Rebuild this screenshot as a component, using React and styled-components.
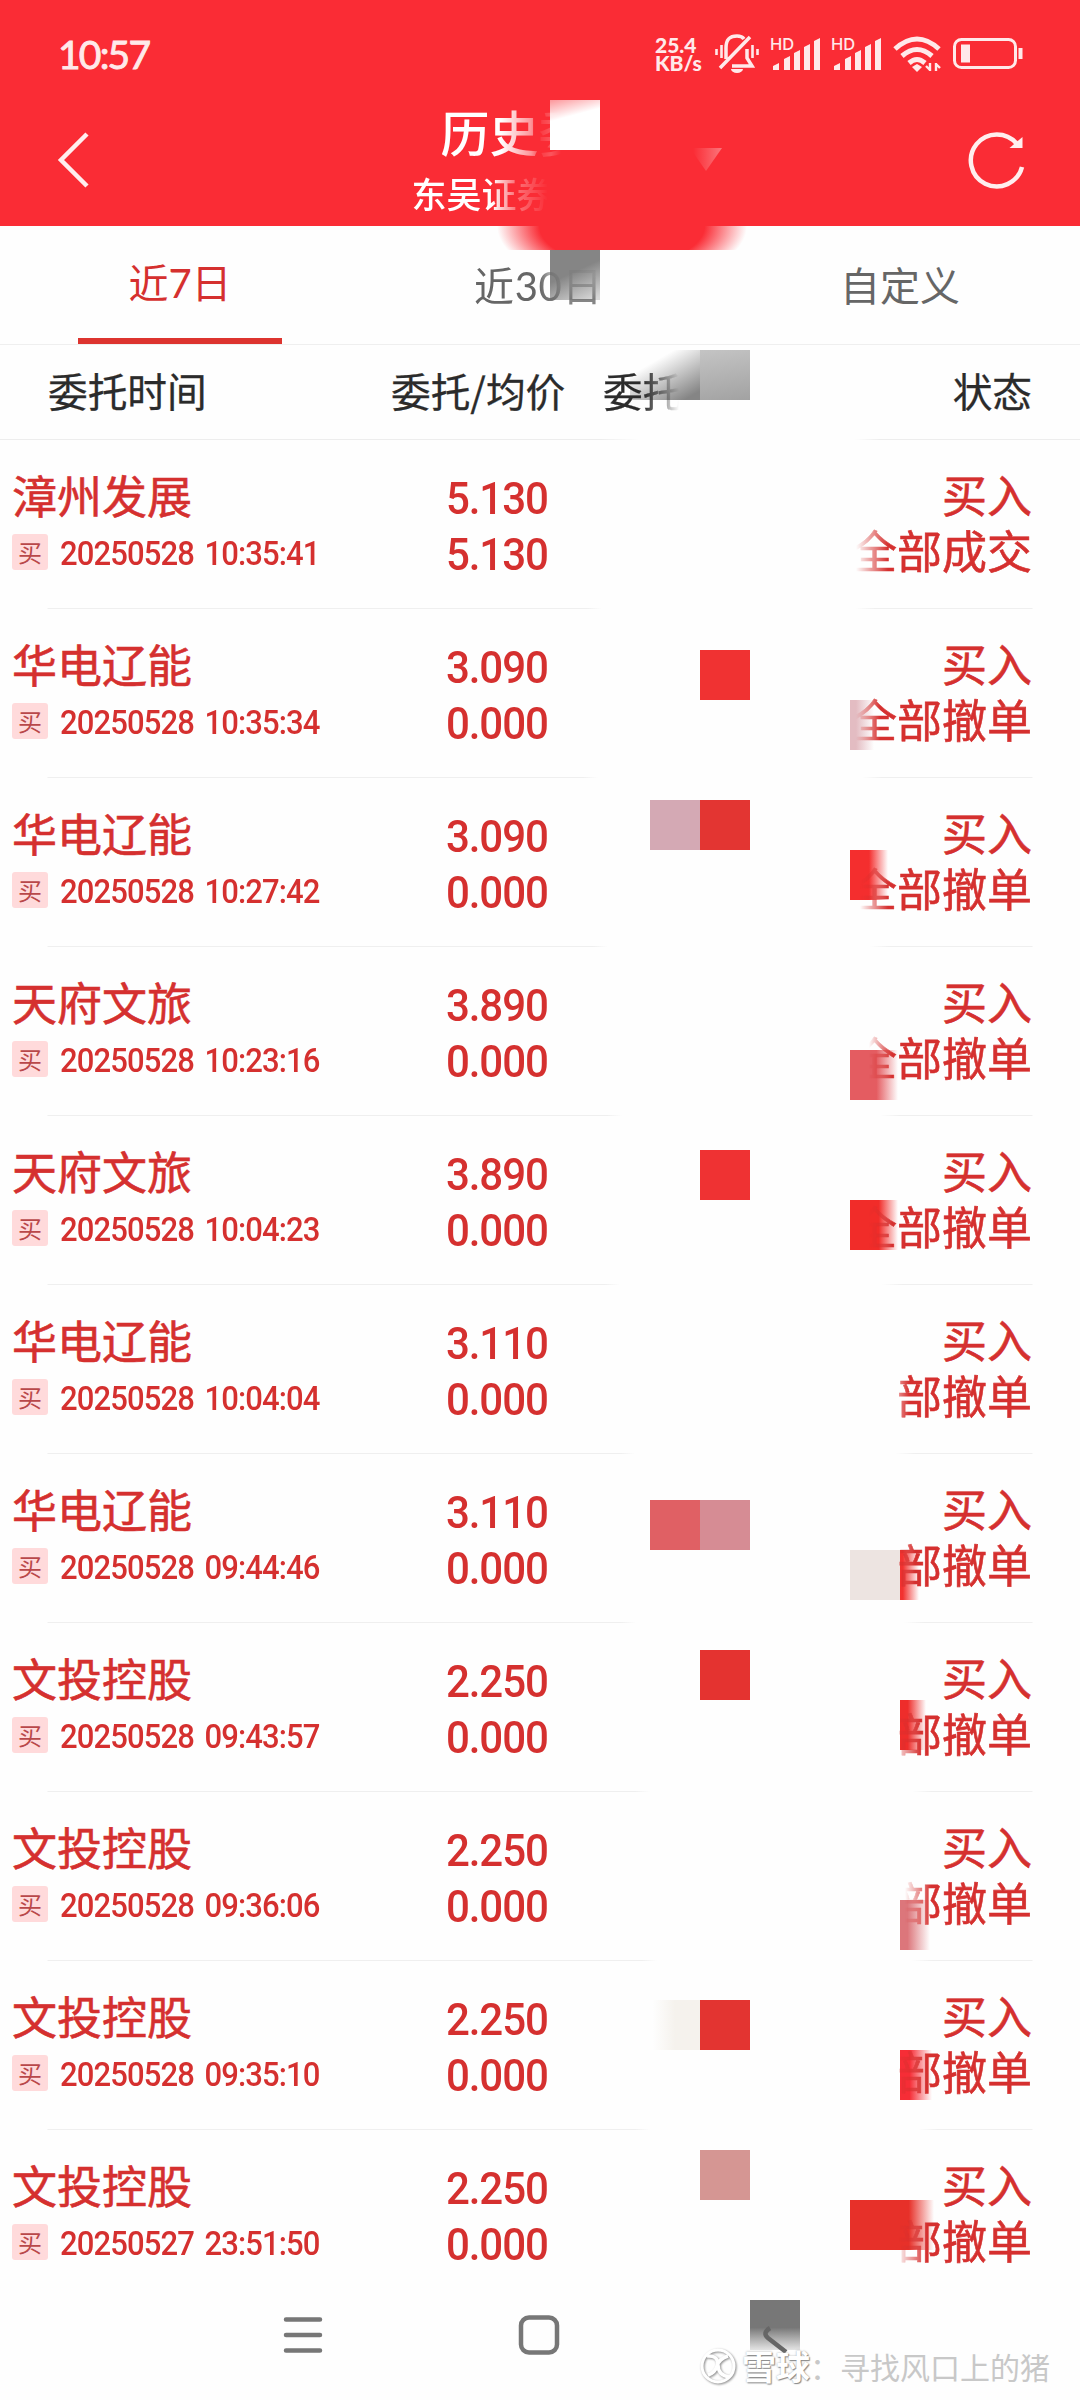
import React from 'react'
import styled, {createGlobalStyle} from "styled-components";

const CJK = `"Noto Sans CJK SC", sans-serif`;
const RED = '#d5302f';
const HEADER_RED = '#fa2c35';

const GlobalStyle = createGlobalStyle`
    * {
        box-sizing: border-box;
    }
    body {
        margin: 0;
        background: #fefefe;
        font-family: Roboto, ${CJK};
    }
    svg {
        flex: none;
        overflow: visible;
    }
`;

const Screen = styled.div`
    position: relative;
    width: 1080px;
    height: 2400px;
    overflow: hidden;
    display: flex;
    flex-direction: column;
    background: #fefefe;
`;

const Top = styled.header`
    height: 226px;
    flex: none;
    background: ${HEADER_RED};
    color: #fff;
    display: flex;
    flex-direction: column;
`;

const StatusBar = styled.div`
    height: 96px;
    padding: 12px 57px 0 58px;
    display: flex;
    justify-content: space-between;
    align-items: center;
    color: #ffe9ea;
`;

const Clock = styled.span`
    font: 400 39px/1 Lato, sans-serif;
    letter-spacing: -1.8px;
    -webkit-text-stroke: .9px #ffe9ea;
`;

const StatusIcons = styled.div`
    display: flex;
    align-items: center;
    gap: 12px;
`;

const NetSpeed = styled.div`
    width: 48px;
    display: flex;
    flex-direction: column;
    font: 900 21px/18px Lato, sans-serif;
    white-space: nowrap;
`;

const NavRow = styled.div`
    height: 130px;
    padding: 0 55px 0 57px;
    display: flex;
    justify-content: space-between;
`;

const Titles = styled.div`
    width: 256px;
    margin-left: 21px;
    display: flex;
    flex-direction: column;
    font-family: ${CJK};
`;

const Title = styled.h1`
    margin: 7px 0 0 29px;
    font-size: 49px;
    line-height: 56px;
    font-weight: 500;
    mask-image: linear-gradient(to right, #000 60px, rgba(0, 0, 0, .5) 90px, rgba(0, 0, 0, .08) 100px, rgba(0, 0, 0, .2) 110px, transparent 120px);
`;

const Subtitle = styled.div`
    margin-top: 9px;
    font-size: 35px;
    line-height: 50px;
    font-weight: 500;
    mask-image: linear-gradient(to right, #000 80px, rgba(0, 0, 0, .35) 103px, rgba(0, 0, 0, .12) 125px, transparent 136px);
`;

const Tabs = styled.nav`
    height: 119px;
    flex: none;
    border-bottom: 1px solid #efefef;
    display: grid;
    grid-template-columns: 360px 360px 360px;
`;

const Tab = styled.div`
    position: relative;
    display: flex;
    flex-direction: column;
    align-items: center;
    justify-content: space-between;
    font: 400 40px/58px Lato, ${CJK};
    color: ${props => props.$active ? RED : '#666'};
    padding-top: ${props => props.$active ? 28 : 31}px;
    &:after {
        content: '';
        width: 204px;
        height: 6px;
        background: ${props => props.$active ? '#dd342f' : 'transparent'};
    }
`;

const SmearedLabel = styled.span`
    margin-right: 3px;
    letter-spacing: .6px;
    mask-image: linear-gradient(to right, #000 65px, transparent 85px), linear-gradient(to bottom, rgba(0, 0, 0, .15) 16px, rgba(0, 0, 0, .8) 42px);
`;

const Columns = styled.div`
    height: 95px;
    flex: none;
    padding: 0 48px 6px 48px;
    display: grid;
    grid-template-columns: 343px 212px 1fr auto;
    align-items: center;
    font: 400 39.700px/58px ${CJK};
    color: #2b2b2b;
    -webkit-text-stroke: .3px #2b2b2b;
    background: linear-gradient(to right, #ededed 600px, transparent 640px, transparent 855px, #ededed 880px) bottom / 100% 1px no-repeat;
`;

const FadedColumn = styled.span`
    mask-image: linear-gradient(to right, #000 40px, rgba(0, 0, 0, .5) 60px, transparent 76px);
`;

const Row = styled.div`
    height: 169px;
    flex: none;
    padding: 24px 48px 0 12px;
    display: grid;
    grid-template-columns: 434px 1fr auto;
    color: ${RED};
    background: linear-gradient(to right, transparent 47px, #efefef 48px, #efefef ${props => props.$gap[0] - 15}px, transparent ${props => props.$gap[0]}px, transparent ${props => props.$gap[1] - 10}px, #efefef ${props => props.$gap[1] + 10}px, #efefef 1032px, transparent 1033px) bottom / 100% 1px no-repeat;
    &:nth-last-child(2) {
        background: none;
    }
`;

const Name = styled.div`
    font: 400 45px/64px ${CJK};
    -webkit-text-stroke: .6px ${RED};
    margin-top: -1px;
`;

const Meta = styled.div`
    display: flex;
    align-items: center;
    gap: 12px;
    height: 36px;
    margin-top: 7px;
`;

const Time = styled.time`
    font: 500 33px/36px Roboto, sans-serif;
    letter-spacing: -.95px;
    word-spacing: 4px;
    white-space: nowrap;
    transform: scaleX(.94);
    transform-origin: left;
    padding-top: 4px;
`;

const Side = styled.span`
    width: 36px;
    height: 36px;
    border-radius: 3px;
    background: #ffdadb;
    color: #b9484a;
    text-align: center;
    font: 400 24px/35px ${CJK};
`;

const Prices = styled.div`
    padding-top: 7px;
    font: 500 45px/56px Roboto, sans-serif;
    letter-spacing: -1.2px;
    transform: scaleX(.935);
    transform-origin: left;
`;

const State = styled.div`
    font: 400 45px/56px ${CJK};
    -webkit-text-stroke: .6px ${RED};
    text-align: right;
    padding-top: 2px;
`;

const StateResult = styled.div`
    mask-image: linear-gradient(to right, transparent ${props => props.$fade[0]}px, #000 ${props => props.$fade[1]}px);
`;

/* mosaic patches that hide parts of the list */
const Patch = styled.i`
    position: absolute;
    left: ${props => props.$x}px;
    top: ${props => props.$y}px;
    width: ${props => props.$w || 50}px;
    height: ${props => props.$h || 50}px;
    background: ${props => props.$bg};
`;

const Dropdown = styled.i`
    position: absolute;
    left: 690px;
    top: 148px;
    width: 32px;
    height: 23px;
    clip-path: polygon(0 0, 100% 0, 50% 100%);
    background: linear-gradient(to right, transparent 10%, rgba(255, 255, 255, .35));
`;

const BottomNav = styled.div`
    flex: 1;
    position: relative;
    display: flex;
    align-items: flex-start;
    gap: 196px;
    padding: 16px 0 0 284px;
    color: #777;
`;

const Watermark = styled.div`
    position: absolute;
    right: 30px;
    bottom: 12px;
    display: flex;
    align-items: center;
    color: #c8c8c8;
    font: 400 30px/44px ${CJK};
    svg {
        margin-right: 5px;
        filter: drop-shadow(1px 1px 1px #888);
    }
    b {
        color: #fff;
        font-size: 34px;
        font-weight: 700;
        text-shadow: 1px 1px 1px #888, 0 0 2px #aaa;
    }
`;

const orders = [
    {name: '漳州发展', time: '20250528 10:35:41', price: '5.130', avg: '5.130', result: '全部成交', gap: [602, 865], fade: [4, 36]},
    {name: '华电辽能', time: '20250528 10:35:34', price: '3.090', avg: '0.000', result: '全部撤单', gap: [598, 872], fade: [4, 28]},
    {name: '华电辽能', time: '20250528 10:27:42', price: '3.090', avg: '0.000', result: '全部撤单', gap: [608, 880], fade: [8, 36]},
    {name: '天府文旅', time: '20250528 10:23:16', price: '3.890', avg: '0.000', result: '全部撤单', gap: [622, 890], fade: [17, 40]},
    {name: '天府文旅', time: '20250528 10:04:23', price: '3.890', avg: '0.000', result: '全部撤单', gap: [620, 892], fade: [17, 40]},
    {name: '华电辽能', time: '20250528 10:04:04', price: '3.110', avg: '0.000', result: '部撤单', gap: [635, 905], fade: [-12, 12]},
    {name: '华电辽能', time: '20250528 09:44:46', price: '3.110', avg: '0.000', result: '部撤单', gap: [636, 914], fade: [-10, 18]},
    {name: '文投控股', time: '20250528 09:43:57', price: '2.250', avg: '0.000', result: '部撤单', gap: [650, 922], fade: [-4, 24]},
    {name: '文投控股', time: '20250528 09:36:06', price: '2.250', avg: '0.000', result: '部撤单', gap: [657, 922], fade: [8, 34]},
    {name: '文投控股', time: '20250528 09:35:10', price: '2.250', avg: '0.000', result: '部撤单', gap: [650, 928], fade: [-4, 28]},
    {name: '文投控股', time: '20250527 23:51:50', price: '2.250', avg: '0.000', result: '部撤单', gap: [650, 928], fade: [0, 30]},
];

const fadeOut = (color, from) => `linear-gradient(to right, ${color} ${from}, transparent)`;

const patches = [
    {x: 497, y: 226, w: 250, h: 24, bg: `radial-gradient(125px 60px at 50% 0, ${HEADER_RED} 66%, transparent 100%)`},
    {x: 550, y: 100, bg: 'linear-gradient(165deg, rgba(255,255,255,.5), #fff 34%)'},
    {x: 550, y: 250, bg: 'linear-gradient(155deg, #858585 45%, #d8d8d8 95%)'},
    {x: 630, y: 350, w: 70, bg: 'linear-gradient(150deg, transparent 28%, #858585 90%)'},
    {x: 700, y: 350, bg: 'linear-gradient(170deg, #c4c4c4, #a2a2a2)'},
    {x: 700, y: 650, bg: '#f03232'},
    {x: 850, y: 700, w: 24, bg: fadeOut('#e3bcc2', '25%')},
    {x: 650, y: 800, bg: '#d4a9b4'},
    {x: 700, y: 800, bg: '#e33532'},
    {x: 850, y: 850, w: 38, bg: fadeOut('#f42e2e', '50%')},
    {x: 850, y: 1050, w: 48, bg: fadeOut('#e45c61', '55%')},
    {x: 700, y: 1150, bg: '#ef3233'},
    {x: 850, y: 1200, w: 48, bg: fadeOut('#f12c29', '60%')},
    {x: 650, y: 1500, bg: '#e06064'},
    {x: 700, y: 1500, bg: '#d68c94'},
    {x: 850, y: 1550, bg: '#ede4e1'},
    {x: 900, y: 1550, w: 19, bg: fadeOut('#f23230', '15%')},
    {x: 700, y: 1650, bg: '#e43330'},
    {x: 900, y: 1700, w: 26, bg: fadeOut('#ee2d2b', '30%')},
    {x: 900, y: 1900, w: 30, bg: fadeOut('#dc767b', '25%')},
    {x: 650, y: 2000, bg: 'linear-gradient(to right, transparent 5%, #f5f2ed 50%)'},
    {x: 700, y: 2000, bg: '#e33431'},
    {x: 900, y: 2050, w: 32, bg: fadeOut('#f62d36', '30%')},
    {x: 700, y: 2150, bg: '#d59693'},
    {x: 850, y: 2200, w: 84, bg: fadeOut('#e73029', '70%')},
    {x: 750, y: 2300, bg: 'linear-gradient(to bottom, #777 55%, #e4e4e4)'},
];

const BellOff = () => <svg width="44" height="40" viewBox="0 0 44 40" fill="none" stroke="currentColor" strokeWidth="3.500">
    <path d="M11 25V14C11 4 16 2 22 2Q27 2 29 5M32 15V24L37 32H17M5 34L35 3"/>
    <path d="M1.500 15v6M6.500 11v13M37.500 11v13M42.500 15v6" strokeWidth="2.600"/>
    <path d="M16 35h12a6 4 0 0 1-12 0z" fill="currentColor" stroke="none"/>
</svg>;

const Signal = () => <svg width="49" height="36" viewBox="0 0 49 36" fill="currentColor">
    <text x="-1" y="14" fontFamily="Inter" fontSize="16.500" fontWeight="500">HD</text>
    <path d="M2 34v-4l6-3v7zM13 34V23l6-3v14zM23 34V17l6-3v20zM33 34V11l6-3v26zM43 34V5l6-3v32z"/>
</svg>;

const Wifi = () => <svg width="48" height="38" viewBox="0 0 48 38" fill="none" stroke="currentColor" strokeWidth="5">
    <path d="M2 14Q24-6 46 14M9 21Q24 8 39 21M16 28q8-7 16 0"/>
    <path d="M24 29l5 3-5 5-5-5z" fill="currentColor" stroke="none"/>
    <path d="M37 36v-8m0 7l-4-4M43 36v-8m0 1l4 4" strokeWidth="2.400"/>
</svg>;

const Battery = () => <svg width="70" height="32" viewBox="0 0 70 32">
    <rect x="1.500" y="1.500" width="61" height="28" rx="7" fill="none" stroke="currentColor" strokeWidth="3"/>
    <path d="M8 6.500h9v18h-9zM65.500 10h4v11h-4z" fill="currentColor"/>
</svg>;

const App = () => <Screen>
    <GlobalStyle/>
    {patches.map((p, i) => <Patch key={i} $x={p.x} $y={p.y} $w={p.w} $h={p.h} $bg={p.bg}/>)}
    <Dropdown/>
    <Top>
        <StatusBar>
            <Clock>10:57</Clock>
            <StatusIcons>
                <NetSpeed>
                    <span>25.4</span>
                    <span>KB/s</span>
                </NetSpeed>
                <BellOff/>
                <Signal/>
                <Signal/>
                <Wifi/>
                <Battery/>
            </StatusIcons>
        </StatusBar>
        <NavRow>
            <svg width="34" height="130" viewBox="57 96 34 130" fill="none" stroke="#ffeeee" strokeWidth="4.500">
                <path d="M87 134L61 160L87 186"/>
            </svg>
            <Titles>
                <Title>历史委</Title>
                <Subtitle>东吴证券</Subtitle>
            </Titles>
            <svg width="58" height="130" viewBox="967 96 58 130" fill="none" stroke="#ffeeee" strokeWidth="4.500">
                <path d="M1022 167A26 26 0 1 1 1017 144"/>
                <path d="M1022.500 137v11h-13z" fill="#ffeeee" stroke="none"/>
            </svg>
        </NavRow>
    </Top>
    <Tabs>
        <Tab $active>近7日</Tab>
        <Tab><SmearedLabel>近30日</SmearedLabel></Tab>
        <Tab>自定义</Tab>
    </Tabs>
    <Columns>
        <span>委托时间</span>
        <span>委托/均价</span>
        <FadedColumn>委托</FadedColumn>
        <span>状态</span>
    </Columns>
    {orders.map(o => <Row key={o.time} $gap={o.gap}>
        <div>
            <Name>{o.name}</Name>
            <Meta><Side>买</Side><Time>{o.time}</Time></Meta>
        </div>
        <Prices>
            <div>{o.price}</div>
            <div>{o.avg}</div>
        </Prices>
        <State>
            <div>买入</div>
            <StateResult $fade={o.fade}>{o.result}</StateResult>
        </State>
    </Row>)}
    <BottomNav>
        <svg width="38" height="40" viewBox="0 0 38 40" fill="none" stroke="currentColor" strokeWidth="4.500" strokeLinecap="round">
            <path d="M2 4.500h34M2 20h34M2 35.500h34"/>
        </svg>
        <svg width="41" height="40" viewBox="0 0 41 40" fill="none" stroke="currentColor" strokeWidth="4.500">
            <rect x="3" y="2.500" width="36" height="35" rx="8"/>
        </svg>
        <svg width="40" height="40" viewBox="755 2315 40 40" fill="none" stroke="#666" strokeWidth="4.500">
            <path d="M770 2328Q762 2333 768 2338L786 2352"/>
        </svg>
        <Watermark>
            <svg width="38" height="38" viewBox="0 0 38 38" fill="none" stroke="#fff" strokeWidth="3">
                <circle cx="19" cy="19" r="16"/>
                <path d="M8 9Q19 8 19 18T30 30M29 9Q20 12 18 19T9 28" strokeWidth="3.500"/>
            </svg>
            <b>雪球</b>：<span>寻找风口上的猪</span>
        </Watermark>
    </BottomNav>
</Screen>;

export default App;
